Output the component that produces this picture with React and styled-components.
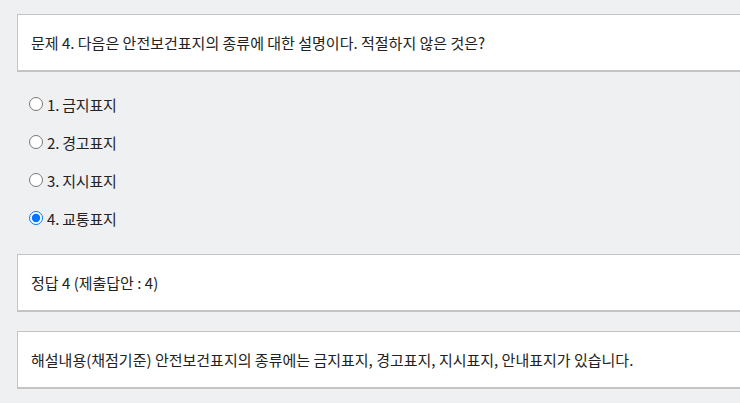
import React from "react";
import styled, { createGlobalStyle } from "styled-components";

const GlobalStyle = createGlobalStyle`
  html, body {
    margin: 0;
    padding: 0;
    background: #eff0f2;
    overflow: hidden;
  }
  body {
    font-family: "Noto Sans CJK KR", "Noto Sans", sans-serif;
    color: #222;
  }
`;

const Page = styled.div`
  padding: 14px 0 0 17px;
  width: 740px;
`;

const Box = styled.div`
  width: 760px;
  height: ${(p) => p.h || 56}px;
  box-sizing: border-box;
  background: #fff;
  border: 1px solid #c4c4c4;
  border-bottom-width: 2px;
  display: flex;
  align-items: center;
  padding-left: 13px;
  font-size: 15px;
  margin-bottom: ${(p) => p.mb || 0}px;
`;

const Options = styled.div`
  display: flex;
  flex-direction: column;
  padding: 23px 0 27px 12px;
  gap: 20px;
`;

const Option = styled.label`
  display: flex;
  align-items: center;
  height: 18px;
  font-size: 15px;
  letter-spacing: -0.2px;
  gap: 4px;
`;

const Radio = styled.input`
  margin: 0;
  width: 14px;
  height: 14px;
`;

const options = ["1. 금지표지", "2. 경고표지", "3. 지시표지", "4. 교통표지"];

export default function App() {
  return (
    <Page>
      <GlobalStyle />
      <Box h={58}>문제 4. 다음은 안전보건표지의 종류에 대한 설명이다. 적절하지 않은 것은?</Box>
      <Options>
        {options.map((o, i) => (
          <Option key={o}>
            <Radio type="radio" name="q4" defaultChecked={i === 3} />
            {o}
          </Option>
        ))}
      </Options>
      <Box h={58} mb={19}>정답 4 (제출답안 : 4)</Box>
      <Box h={58}>
        해설내용(채점기준) 안전보건표지의 종류에는 금지표지, 경고표지, 지시표지, 안내표지가 있습니다.
      </Box>
    </Page>
  );
}
